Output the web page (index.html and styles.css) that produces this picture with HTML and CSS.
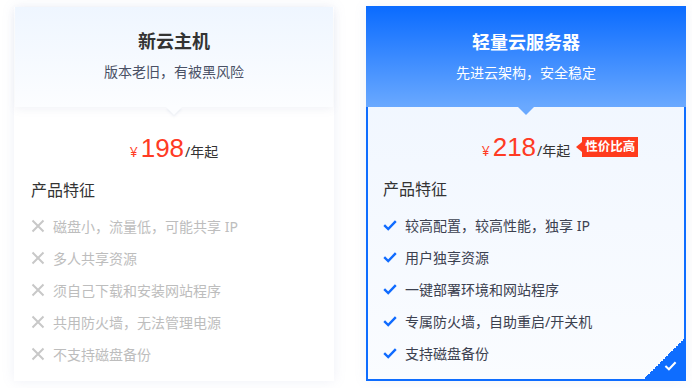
FILE: index.html
```html
<!DOCTYPE html>
<html lang="zh">
<head>
<meta charset="utf-8">
<link rel="stylesheet" href="styles.css">
</head>
<body>
<div class="wrap">
  <div class="card card-old">
    <div class="head">
      <div class="title">新云主机</div>
      <div class="sub">版本老旧，有被黑风险</div>
    </div>
    <div class="body">
      <div class="price"><span class="pg"><span class="yen">¥</span><span class="num">198</span><span class="unit">/年起</span></span></div>
      <div class="ftitle">产品特征</div>
      <ul class="list">
        <li><svg class="ic" viewBox="0 0 14 14"><path d="M1.5 1.5 L12.5 12.5 M12.5 1.5 L1.5 12.5" stroke="#c8c8c8" stroke-width="2" fill="none"/></svg>磁盘小，流量低，可能共享 IP</li>
        <li><svg class="ic" viewBox="0 0 14 14"><path d="M1.5 1.5 L12.5 12.5 M12.5 1.5 L1.5 12.5" stroke="#c8c8c8" stroke-width="2" fill="none"/></svg>多人共享资源</li>
        <li><svg class="ic" viewBox="0 0 14 14"><path d="M1.5 1.5 L12.5 12.5 M12.5 1.5 L1.5 12.5" stroke="#c8c8c8" stroke-width="2" fill="none"/></svg>须自己下载和安装网站程序</li>
        <li><svg class="ic" viewBox="0 0 14 14"><path d="M1.5 1.5 L12.5 12.5 M12.5 1.5 L1.5 12.5" stroke="#c8c8c8" stroke-width="2" fill="none"/></svg>共用防火墙，无法管理电源</li>
        <li><svg class="ic" viewBox="0 0 14 14"><path d="M1.5 1.5 L12.5 12.5 M12.5 1.5 L1.5 12.5" stroke="#c8c8c8" stroke-width="2" fill="none"/></svg>不支持磁盘备份</li>
      </ul>
    </div>
  </div>
  <div class="card card-new">
    <div class="head">
      <div class="title">轻量云服务器</div>
      <div class="sub">先进云架构，安全稳定</div>
    </div>
    <div class="body">
      <div class="price"><span class="pg"><span class="yen">¥</span><span class="num">218</span><span class="unit">/年起</span><span class="badge">性价比高</span></span></div>
      <div class="ftitle">产品特征</div>
      <ul class="list">
        <li><svg class="ic" viewBox="0 0 14 14"><path d="M1.2 7.2 L5.2 11 L12.8 3.2" stroke="#0f6bff" stroke-width="2.4" fill="none"/></svg>较高配置，较高性能，独享 IP</li>
        <li><svg class="ic" viewBox="0 0 14 14"><path d="M1.2 7.2 L5.2 11 L12.8 3.2" stroke="#0f6bff" stroke-width="2.4" fill="none"/></svg>用户独享资源</li>
        <li><svg class="ic" viewBox="0 0 14 14"><path d="M1.2 7.2 L5.2 11 L12.8 3.2" stroke="#0f6bff" stroke-width="2.4" fill="none"/></svg>一键部署环境和网站程序</li>
        <li><svg class="ic" viewBox="0 0 14 14"><path d="M1.2 7.2 L5.2 11 L12.8 3.2" stroke="#0f6bff" stroke-width="2.4" fill="none"/></svg>专属防火墙，自助重启/开关机</li>
        <li><svg class="ic" viewBox="0 0 14 14"><path d="M1.2 7.2 L5.2 11 L12.8 3.2" stroke="#0f6bff" stroke-width="2.4" fill="none"/></svg>支持磁盘备份</li>
      </ul>
      <div class="corner"><svg viewBox="0 0 14 14"><path d="M1.5 7.5 L5.3 11 L12.5 3.5" stroke="#fff" stroke-width="2.2" fill="none"/></svg></div>
    </div>
  </div>
</div>
</body>
</html>
```

FILE: styles.css
```css
* { box-sizing: border-box; }
html, body { margin: 0; padding: 0; background: #fff; }
body {
  width: 692px;
  height: 388px;
  overflow: hidden;
  font-family: "Noto Sans", "Noto Sans CJK SC", sans-serif;
}
.wrap {
  display: flex;
  gap: 32px;
  padding: 6px 0 0 14px;
  align-items: flex-start;
}
.card {
  width: 320px;
  height: 375px;
  position: relative;
  display: flex;
  flex-direction: column;
}
.card-old {
  background: #fff;
  box-shadow: 0 0 12px rgba(120, 140, 190, 0.13);
  margin-top: 1px;
  height: 374px;
}
.card-new {
  border: 2px solid #0e6dff;
  background: linear-gradient(180deg, #eef5ff 0%, #fafcff 100%);
  box-shadow: 0 0 12px rgba(120, 140, 190, 0.1);
}
.head {
  height: 100px;
  position: relative;
  z-index: 1;
  text-align: center;
  padding-top: 21px;
}
.card-old .head {
  margin: 0 1px;
  background: linear-gradient(180deg, #eff6ff 0%, #fcfdff 100%);
  box-shadow: 0 3px 8px rgba(100, 120, 170, 0.08);
}
.card-new .head {
  margin: -2px -2px 0;
  height: 101px;
  padding-top: 23px;
  background: linear-gradient(180deg, #0a6bff 0%, #6aa9ff 100%);
}
.head::after {
  content: "";
  position: absolute;
  left: 50%;
  top: 100%;
  margin-left: -8px;
  border-left: 8px solid transparent;
  border-right: 8px solid transparent;
  border-top: 8px solid #fcfdff;
}
.card-old .head::after {
  filter: drop-shadow(0 2px 1px rgba(100, 120, 170, 0.1));
}
.card-new .head::after {
  border-top-color: #6aa9ff;
}
.title {
  font-size: 18px;
  font-weight: bold;
  line-height: 26px;
  color: #333;
}
.sub {
  margin-top: 8px;
  font-size: 14px;
  line-height: 20px;
  color: #4a5166;
}
.card-new .title, .card-new .sub { color: #fff; }
.body {
  flex: 1;
  padding: 26px 0 0 17px;
  position: relative;
}
.card-new .body { padding-left: 15px; padding-top: 25px; }
.price {
  height: 30px;
  display: flex;
  justify-content: center;
  margin-left: -17px;
  line-height: 30px;
}
.card-new .price { margin-left: -15px; }
.pg {
  position: relative;
  display: flex;
  align-items: baseline;
  color: #ff3b24;
}
.yen { font-size: 14px; margin-right: 3px; }
.num { font-size: 26px; font-family: "Liberation Sans", "Noto Sans", sans-serif; }
.unit { font-size: 14px; color: #333; margin-left: 1px; }
.badge {
  position: absolute;
  left: calc(100% + 12px);
  top: 5px;
  height: 20px;
  line-height: 20px;
  padding: 0 3px 0 3px;
  background: #ff3b1d;
  color: #fff;
  font-size: 12.5px;
  font-weight: bold;
  white-space: nowrap;
}
.badge::before {
  content: "";
  position: absolute;
  left: -6px;
  top: 4.5px;
  border-top: 5.5px solid transparent;
  border-bottom: 5.5px solid transparent;
  border-right: 6px solid #ff3b1d;
}
.ftitle {
  margin-top: 16px;
  font-size: 16px;
  line-height: 22px;
  color: #333;
}
.list {
  list-style: none;
  margin: 9px 0 0;
  padding: 0;
}
.list li {
  display: flex;
  align-items: center;
  height: 32px;
  font-size: 14px;
  color: #bdbdbd;
}
.card-new .list li { color: #3c4150; }
.ic {
  width: 14px;
  height: 14px;
  margin-right: 8px;
  flex: none;
}
.corner {
  position: absolute;
  right: 0;
  bottom: 0;
  width: 40px;
  height: 40px;
  background: linear-gradient(135deg, transparent 50%, #0e6dff 50%);
}
.corner svg {
  position: absolute;
  right: 7px;
  bottom: 7px;
  width: 13px;
  height: 13px;
}
```
